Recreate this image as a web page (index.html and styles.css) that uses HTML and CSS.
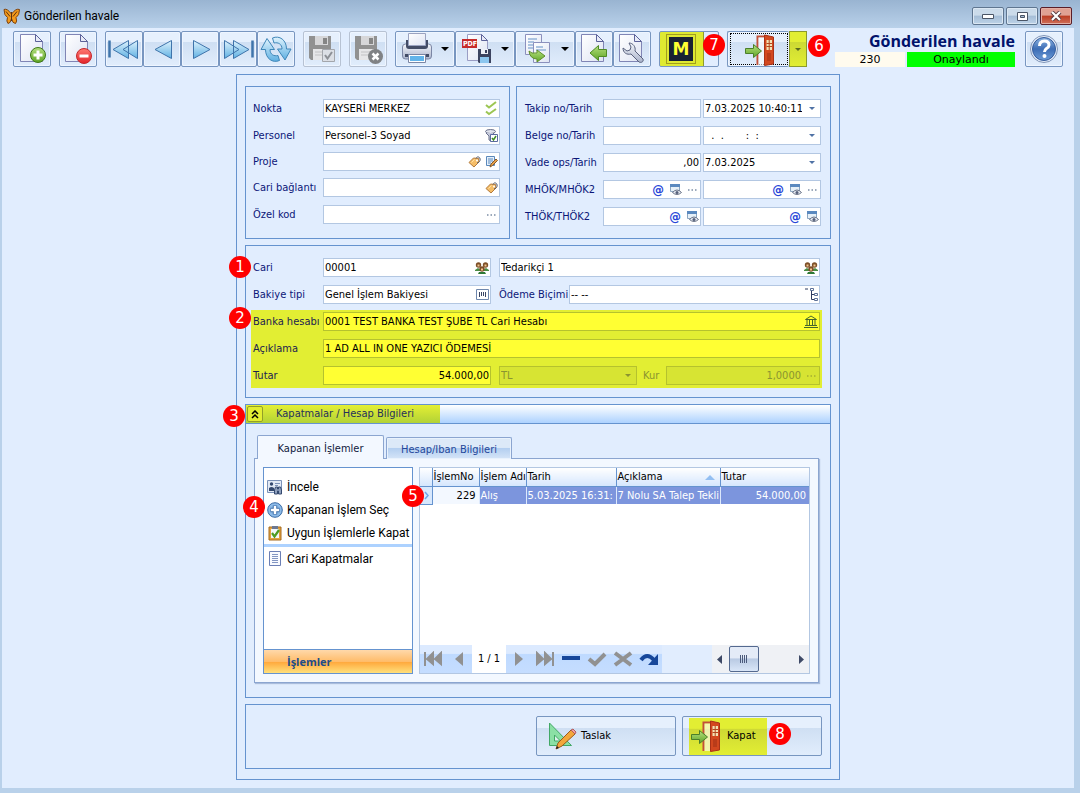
FILE: index.html
```html
<!DOCTYPE html>
<html lang="tr">
<head>
    <meta charset="UTF-8">
    <meta name="viewport" content="width=device-width, initial-scale=1.0">
    <title>Gönderilen havale</title>
    <link rel="stylesheet" href="styles.css">
</head>
<body>
    <!-- shared icons -->
    <svg class="defs" width="0" height="0" aria-hidden="true">
        <defs>
            <linearGradient id="g-page" x1="0" y1="0" x2="1" y2="1"><stop offset="0" stop-color="#fff"/><stop offset="1" stop-color="#dfe4f3"/></linearGradient>
            <linearGradient id="g-blue" x1="0" y1="0" x2="0" y2="1"><stop offset="0" stop-color="#dff3fd"/><stop offset="1" stop-color="#5fb0e2"/></linearGradient>
            <linearGradient id="g-green" x1="0" y1="0" x2="0" y2="1"><stop offset="0" stop-color="#b5e07e"/><stop offset="1" stop-color="#5fa526"/></linearGradient>
            <linearGradient id="g-red" x1="0" y1="0" x2="0" y2="1"><stop offset="0" stop-color="#ff7a72"/><stop offset="1" stop-color="#e3242b"/></linearGradient>
            <linearGradient id="g-steel" x1="0" y1="0" x2="0" y2="1"><stop offset="0" stop-color="#f4f6fb"/><stop offset="1" stop-color="#aab3cb"/></linearGradient>
            <linearGradient id="g-help" x1="0" y1="0" x2="0" y2="1"><stop offset="0" stop-color="#8db4e2"/><stop offset=".5" stop-color="#3d6db5"/><stop offset="1" stop-color="#6c9bd6"/></linearGradient>
        </defs>
        <symbol id="page" viewBox="0 0 32 32">
            <path d="M4.500 1.500h15l7 7v20h-22z" fill="url(#g-page)" stroke="#8085b5"/>
            <path d="M19.500 1.500v7h7z" fill="#e8ebf7" stroke="#5c6299"/>
        </symbol>
        <symbol id="floppy" viewBox="0 0 32 32">
            <path d="M3 3h22v24H5l-2-2z" fill="#919191"/>
            <path d="M9 3h13v9H9z" fill="#d6d6d8"/><path d="M17 5h4v6h-4z" fill="#858585"/>
            <path d="M7 16h15v11H7z" fill="#e6e6e8"/><path d="M9 19h11M9 22h11" stroke="#c2c2c4"/>
        </symbol>
        <symbol id="tri" viewBox="0 0 32 32">
            <path d="M25.500 7.500v18L9 16.500z" fill="url(#g-blue)" stroke="#3f74ab"/>
        </symbol>
        <symbol id="ffwd" viewBox="0 0 32 32">
            <path d="M30.500 7.500v17" stroke="#3f74ab" stroke-width="2.500"/>
            <path d="M2.500 7.500v18L17 16.500zM11.500 7.500v18L27 16.500z" fill="url(#g-blue)" stroke="#3f74ab"/>
        </symbol>
        <symbol id="exit" viewBox="0 0 32 32">
            <path d="M14.500 31V2.500h9" fill="none" stroke="#c2513a" stroke-width="2"/>
            <path d="M15.500 3.500h6V31h-6z" fill="#fff" fill-opacity=".6"/>
            <path d="M21.500 1l9 2v27l-9 1.500z" fill="#d3481f" stroke="#a93218"/>
            <path d="M23.500 6h5.500v10h-5.500z" fill="#f3e2b5"/><path d="M26.200 6v10M23.500 9.500H29M23.500 12.500H29" stroke="#b3471f"/>
            <path d="M26 19v8" stroke="#b93c1a" stroke-width="4"/>
            <path d="M2.500 14.500h8v-4l8 6.500-8 6.500v-4h-8z" fill="url(#g-green)" stroke="#4b7f2a"/>
        </symbol>
        <symbol id="caret" viewBox="0 0 8 4"><path d="M0 0h8L4 4z" fill="currentColor"/></symbol>
        <symbol id="dots" viewBox="0 0 12 12"><path d="M2 6h1.500M5.500 6H7M9 6h1.500" stroke="currentColor" stroke-width="1.200"/></symbol>
        <symbol id="tag" viewBox="0 0 13 13">
            <path d="M1 7.500L5.500 3l5 .5.5 3.500-5 5z" fill="#f5bd68" stroke="#b27a3c"/>
            <path d="M3.500 7.500L6.500 4.500" stroke="#ffe2a4"/><circle cx="9" cy="5.500" r="1" fill="#fff"/><path d="M8 3.500c1-3 5-1.500 4 2-.5 1.500-2 2.500-3 2" fill="none" stroke="#555b6e"/>
        </symbol>
        <symbol id="view" viewBox="0 0 13 13">
            <path d="M1.500 2.500h9v6h-9z" fill="#e6f0f8" stroke="#8ba5c0"/><path d="M1 1h10v3H1z" fill="#5a89bf"/>
            <path d="M3.500 9.500q4.500-5 9 0-4.500 4-9 0z" fill="#e9edf4" stroke="#6b7488"/><circle cx="8" cy="9.500" r="1.500" fill="#56607a"/>
        </symbol>
        <symbol id="people" viewBox="0 0 14 14">
            <path d="M0 9l3-2 3 2v1H0zM8 9l3-2 3 2v1H8z" fill="#4a8d43"/>
            <circle cx="3.500" cy="4" r="2.700" fill="#7d4f28"/><circle cx="10.500" cy="4" r="2.700" fill="#7d4f28"/>
            <path d="M3 13l1-2h6l1 2z" fill="#2f7a37"/><circle cx="7" cy="8" r="2.700" fill="#7d4f28"/>
            <path d="M2.500 4.500h2M9.500 4.500h2M6 8.500h2" stroke="#f3c58f" stroke-width="2"/>
        </symbol>
    </svg>

    <div class="window">
        <header class="titlebar">
            <svg width="18" height="17" viewBox="0 0 18 17"><path d="M8.500 6Q4 0 1 1.500q0 6 3.500 8-1.500 4 .5 6 2.500 0 3.500-5 1 5 4 5 2-2 .5-6 3.500-2 3.500-8Q13 0 8.500 6z" fill="#f39a1b" stroke="#7c4312"/><path d="M8.500 4v9M3 3.500l4 5M14 3.500l-4 5" stroke="#5c3210"/></svg>
            <span class="caption">Gönderilen havale</span>
            <div class="win-buttons">
                <button type="button" aria-label="Küçült"><svg width="12" height="6" viewBox="0 0 12 6"><path d="M.5 1.500h11v4H.5z" fill="#fff" stroke="#4a5566"/></svg></button>
                <button type="button" aria-label="Büyüt"><svg width="11" height="9" viewBox="0 0 11 9"><path d="M.5.5h10v8H.5z" fill="#fff" stroke="#4a5566"/><path d="M3.500 3.500h4v2h-4z" fill="#a9bdd4" stroke="#4a5566"/></svg></button>
                <button type="button" class="close" aria-label="Kapat"><svg width="12" height="10" viewBox="0 0 12 10"><path d="M2 1l8 8M10 1L2 9" stroke="#573a40" stroke-width="4"/><path d="M2 1l8 8M10 1L2 9" stroke="#fff" stroke-width="2.200"/></svg></button>
            </div>
        </header>

        <div class="client">
            <div class="toolbar">
                <div class="group">
                    <button type="button" class="tool" aria-label="Yeni"><svg width="32" height="32"><use href="#page"/><circle cx="22" cy="22" r="7.500" fill="url(#g-green)" stroke="#3f7a17"/><path d="M22 17.500v9M17.500 22h9" stroke="#fff" stroke-width="3"/></svg></button>
                </div>
                <div class="group">
                    <button type="button" class="tool" aria-label="Sil"><svg width="32" height="32"><use href="#page" x="-1"/><circle cx="22" cy="23" r="7.500" fill="url(#g-red)" stroke="#c5282c"/><path d="M17.500 23h9" stroke="#fff" stroke-width="3"/></svg></button>
                </div>
                <div class="group">
                    <button type="button" class="tool" aria-label="İlk"><svg class="flip" width="32" height="32"><use href="#ffwd"/></svg></button>
                    <button type="button" class="tool" aria-label="Önceki"><svg width="32" height="32"><use href="#tri"/></svg></button>
                    <button type="button" class="tool" aria-label="Sonraki"><svg width="32" height="32" viewBox="0 0 32 32"><path d="M9.500 7.500v18L26 16.500z" fill="url(#g-blue)" stroke="#3f74ab"/></svg></button>
                    <button type="button" class="tool" aria-label="Son"><svg width="32" height="32"><use href="#ffwd"/></svg></button>
                    <button type="button" class="tool" aria-label="Yenile"><svg width="32" height="32" viewBox="0 0 32 32"><path d="M12.500 5c7-3 14 2 14 11h4.500l-6 11-7.500-11H22c0-5-4-7-8-6z" fill="url(#g-blue)" stroke="#3f86b8"/><path d="M19.500 27.500c-7 3-14-2-14-11H1L7 5.500l7.500 11H10c0 5 4 7 8 6z" fill="url(#g-blue)" stroke="#3f86b8"/></svg></button>
                </div>
                <div class="group">
                    <button type="button" class="tool" aria-label="Kaydet ve onayla" disabled><svg width="32" height="32"><use href="#floppy"/><path d="M16.500 16.500h12v12h-12z" fill="#dcdfe5" stroke="#a3a6ac"/><path d="M19 22l2.500 3.500L26 19" fill="none" stroke="#8d9096" stroke-width="2"/></svg></button>
                </div>
                <div class="group">
                    <button type="button" class="tool" aria-label="Kaydet ve kapat" disabled><svg width="32" height="32"><use href="#floppy"/><circle cx="23.500" cy="23.500" r="7.500" fill="#808285"/><path d="M20.500 20.500l6 6M26.500 20.500l-6 6" stroke="#fff" stroke-width="2.500"/></svg></button>
                </div>
                <div class="group">
                    <button type="button" class="tool wide" aria-label="Yazdır"><svg width="32" height="32" viewBox="0 0 32 32"><path d="M1.500 14q0-3 3-3h23q3 0 3 3v9q0 3-3 3h-23q-3 0-3-3z" fill="url(#g-steel)" stroke="#7b86a5"/><path d="M5 7h22v6q0 3-3 3H8q-3 0-3-3z" fill="#434c66"/><path d="M7.500.5h17v12h-17z" fill="url(#g-page)" stroke="#9ba3c0"/><path d="M4 21h24v3H4z" fill="#434c66"/><path d="M7.500 21.500h17v8h-17z" fill="#fff" stroke="#7b86a5"/><path d="M9 23h14v5H9z" fill="#62b4ea"/></svg><svg class="drop" width="8" height="4"><use href="#caret"/></svg></button>
                    <button type="button" class="tool wide" aria-label="PDF"><svg width="32" height="32" viewBox="0 0 32 32"><path d="M6.500 1.500h14l6 6v20h-20z" fill="url(#g-page)" stroke="#9a9dc4"/><path d="M20.500 1.500v6h6z" fill="#e8ebf7" stroke="#5c6299"/><path d="M1 6h15v9H1z" fill="#c62b2b"/><text class="pdf" x="2" y="13">PDF</text><path d="M17 16h13v14H18l-1-1z" fill="#3c4460"/><path d="M20 16h7v5h-7z" fill="#eef1f8"/><path d="M24 17h2v3h-2z" fill="#3c4460"/><path d="M19 24h9v6h-9z" fill="#8cc6ef"/></svg><svg class="drop" width="8" height="4"><use href="#caret"/></svg></button>
                    <button type="button" class="tool wide" aria-label="Kopyala"><svg width="32" height="32" viewBox="0 0 32 32"><path d="M4.500 1.500h16v20h-16z" fill="url(#g-page)" stroke="#8b90bd"/><path d="M7 6h9M7 9h6M7 12h6M7 15h5" stroke="#94b2d8" stroke-width="1.500"/><path d="M12.500 9.500h16v20h-16z" fill="url(#g-page)" stroke="#8b90bd"/><path d="M15 14h7M15 17h10" stroke="#94b2d8" stroke-width="1.500"/><path d="M8 18q2 3 8 2v-3l8 6-8 6v-3Q9 26 8 18z" fill="url(#g-green)" stroke="#5f8e2a"/></svg><svg class="drop" width="8" height="4"><use href="#caret"/></svg></button>
                    <button type="button" class="tool" aria-label="Geri al"><svg width="32" height="32"><use href="#page" x="-1"/><path d="M28.500 16.500h-8v-4L12 20l8.500 7.500v-4h8z" fill="url(#g-green)" stroke="#4f8a25"/></svg></button>
                    <button type="button" class="tool" aria-label="Ayarlar"><svg width="32" height="32"><use href="#page" x="-1"/><path d="M13 10c4 0 7 4 6 8l8 8c1 3-2 4-4 3l-8-8c-4 1-8-1-8-6l4 3 3-1 1-3z" fill="url(#g-steel)" stroke="#59617d"/></svg></button>
                </div>
                <div class="group">
                    <button type="button" class="tool mark" aria-label="M"><span class="mark-face"><span class="mark-letter">M</span></span></button>
                    <span class="badge badge-7">7</span>
                </div>
                <div class="group">
                    <button type="button" class="tool exit" aria-label="Kapat"><span class="focus"><svg width="32" height="32"><use href="#exit"/></svg></span></button>
                    <button type="button" class="exit-drop" aria-label="Kapat seçenekleri"><svg width="6" height="3"><use href="#caret"/></svg></button>
                    <span class="badge badge-6">6</span>
                </div>
                <div class="doc">
                    <h1>Gönderilen havale</h1>
                    <div class="doc-state"><span class="doc-no">230</span><span class="doc-ok">Onaylandı</span></div>
                </div>
                <button type="button" class="tool" aria-label="Yardım"><svg width="32" height="32" viewBox="0 0 32 32"><circle cx="16" cy="16" r="13.500" fill="#e6eefa" stroke="#8095b8"/><circle cx="16" cy="16" r="11.500" fill="url(#g-help)" stroke="#345b9c"/><path d="M11.500 13q0-5 5-5 4.500 0 4.500 4 0 2-2.500 3.500-2 1.500-2 3.500" fill="none" stroke="#fff" stroke-width="3"/><circle cx="16.500" cy="23" r="2" fill="#fff"/></svg></button>
            </div>

            <main class="form">
                <div class="pair">
                    <section class="box general">
                        <label for="nokta">Nokta</label>
                        <div class="field"><input id="nokta" value="KAYSERİ MERKEZ"><button type="button" aria-label="Nokta seç"><svg width="13" height="15" viewBox="0 0 13 15"><path d="M1 4l3 2.500L11 1M1 10.500l3 2.500 7-5" fill="none" stroke="#9cc653" stroke-width="2"/></svg></button></div>
                        <label for="personel">Personel</label>
                        <div class="field"><input id="personel" value="Personel-3 Soyad"><button type="button" aria-label="Personel seç"><svg width="13" height="13" viewBox="0 0 13 13"><ellipse cx="5.500" cy="2.500" rx="5" ry="2" fill="#e1e4ee" stroke="#69708c"/><path d="M1 4l3 3v4l2 1V7l3-3" fill="#c3c8da" stroke="#69708c"/><path d="M5.500 5.500h7v7h-7z" fill="#fff" stroke="#5a6aa0"/><path d="M7 9l1.500 2L11 7" fill="none" stroke="#3f8c27" stroke-width="1.500"/></svg></button></div>
                        <label for="proje">Proje</label>
                        <div class="field"><input id="proje"><button type="button" aria-label="Proje seç"><svg width="13" height="13"><use href="#tag"/></svg></button><button type="button" aria-label="Proje düzenle"><svg width="13" height="13" viewBox="0 0 13 13"><path d="M1.500 1.500h8v9h-8z" fill="#e5f0fb" stroke="#5a88bb"/><path d="M3 4h5M3 6h5M3 8h3" stroke="#5a88bb"/><path d="M5 12l1-3 5-5 1.500 1.500-5 5z" fill="#e5a04a" stroke="#8a5a28"/></svg></button></div>
                        <label for="baglanti">Cari bağlantı</label>
                        <div class="field"><input id="baglanti"><button type="button" aria-label="Bağlantı seç"><svg width="13" height="13"><use href="#tag"/></svg></button></div>
                        <label for="ozel">Özel kod</label>
                        <div class="field"><input id="ozel"><button type="button" aria-label="Özel kod seç"><svg width="12" height="12"><use href="#dots"/></svg></button></div>
                    </section>

                    <section class="box refs">
                        <label for="takip">Takip no/Tarih</label>
                        <div class="field"><input id="takip"></div>
                        <div class="field"><input aria-label="Takip tarihi" value="7.03.2025 10:40:11"><button type="button" class="combo" aria-label="Takvim"><svg width="6" height="3"><use href="#caret"/></svg></button></div>
                        <label for="belge">Belge no/Tarih</label>
                        <div class="field"><input id="belge"></div>
                        <div class="field"><input class="mask" aria-label="Belge tarihi" value="  .  .       :  :"><button type="button" class="combo" aria-label="Takvim"><svg width="6" height="3"><use href="#caret"/></svg></button></div>
                        <label for="vade">Vade ops/Tarih</label>
                        <div class="field"><input id="vade" class="num" value=",00"></div>
                        <div class="field"><input aria-label="Vade tarihi" value="7.03.2025"><button type="button" class="combo" aria-label="Takvim"><svg width="6" height="3"><use href="#caret"/></svg></button></div>
                        <label for="mhok">MHÖK/MHÖK2</label>
                        <div class="field"><input id="mhok"><button type="button" class="at">@</button><button type="button" aria-label="Göster"><svg width="13" height="13"><use href="#view"/></svg></button><button type="button" aria-label="Seç"><svg width="12" height="12"><use href="#dots"/></svg></button></div>
                        <div class="field"><input aria-label="MHÖK2"><button type="button" class="at">@</button><button type="button" aria-label="Göster"><svg width="13" height="13"><use href="#view"/></svg></button><button type="button" aria-label="Seç"><svg width="12" height="12"><use href="#dots"/></svg></button></div>
                        <label for="thok">THÖK/THÖK2</label>
                        <div class="field"><input id="thok"><button type="button" class="at">@</button><button type="button" aria-label="Göster"><svg width="13" height="13"><use href="#view"/></svg></button></div>
                        <div class="field"><input aria-label="THÖK2"><button type="button" class="at">@</button><button type="button" aria-label="Göster"><svg width="13" height="13"><use href="#view"/></svg></button></div>
                    </section>
                </div>

                <section class="box account">
                    <div class="row">
                        <span class="badge badge-1">1</span>
                        <label for="cari">Cari</label>
                        <div class="field code"><input id="cari" value="00001"><button type="button" aria-label="Cari seç"><svg width="14" height="14"><use href="#people"/></svg></button></div>
                        <div class="field"><input aria-label="Cari adı" value="Tedarikçi 1"><button type="button" aria-label="Cari seç"><svg width="14" height="14"><use href="#people"/></svg></button></div>
                    </div>
                    <div class="row">
                        <label for="bakiye">Bakiye tipi</label>
                        <div class="field code"><input id="bakiye" value="Genel İşlem Bakiyesi"><button type="button" aria-label="Bakiye seç"><svg width="13" height="11" viewBox="0 0 13 11"><path d="M.5.5h12v10H.5z" fill="#fff" stroke="#6e87ad"/><path d="M3.500 3v5M5.500 3v4M7.500 3v4M9.500 3v5" stroke="#3a4664"/></svg></button></div>
                        <label for="odeme" class="second">Ödeme Biçimi</label>
                        <div class="field"><input id="odeme" value="-- --"><button type="button" aria-label="Ödeme seç"><svg width="13" height="13" viewBox="0 0 13 13"><path d="M0 1h3M6.500 3v8.500H9M6.500 6.500H9" fill="none" stroke="#2d3a60"/><path d="M5.500.5h3v2h-3zM9.500 5.500h3v2h-3zM9.500 10.500h3v2h-3z" fill="#fff" stroke="#5d7198"/></svg></button></div>
                    </div>
                    <div class="marked">
                        <span class="badge badge-2">2</span>
                        <div class="row">
                            <label for="banka">Banka hesabı</label>
                            <div class="field"><input id="banka" value="0001 TEST BANKA TEST ŞUBE TL Cari Hesabı"><button type="button" aria-label="Banka seç"><svg width="14" height="13" viewBox="0 0 14 13"><path d="M1.500 4.500L7 1l5.500 3.500zM3 5v5M5.500 5v5M8.500 5v5M11 5v5M1 10.500h12M0 12.500h14" fill="none" stroke="#47672c"/></svg></button></div>
                        </div>
                        <div class="row">
                            <label for="aciklama">Açıklama</label>
                            <div class="field"><input id="aciklama" value="1 AD ALL IN ONE YAZICI ÖDEMESİ"></div>
                        </div>
                        <div class="row">
                            <label for="tutar">Tutar</label>
                            <div class="field code"><input id="tutar" class="num" value="54.000,00"></div>
                            <div class="field off currency"><select aria-label="Para birimi" disabled><option>TL</option></select><svg width="6" height="3"><use href="#caret"/></svg></div>
                            <label for="kur" class="kur">Kur</label>
                            <div class="field off"><input id="kur" class="num" value="1,0000" disabled><button type="button" aria-label="Kur seç" disabled><svg width="12" height="12"><use href="#dots"/></svg></button></div>
                        </div>
                    </div>
                </section>

                <section class="details">
                    <span class="badge badge-3">3</span>
                    <div class="details-head">
                        <div class="details-title">
                            <button type="button" aria-label="Daralt"><svg width="8" height="9" viewBox="0 0 8 9"><path d="M1 4l3-3 3 3M1 8l3-3 3 3" fill="none" stroke="#000" stroke-width="1.500"/></svg></button>
                            <h2>Kapatmalar / Hesap Bilgileri</h2>
                        </div>
                    </div>
                    <div class="details-body">
                        <div class="tabs">
                            <button type="button" class="tab active">Kapanan İşlemler</button>
                            <button type="button" class="tab">Hesap/Iban Bilgileri</button>
                        </div>
                        <div class="tab-page">
                            <nav class="actions">
                                <a href="#incele"><svg width="16" height="16" viewBox="0 0 16 16"><path d="M.5 1.500h14v12H.5z" fill="#e2eaf6" stroke="#7c92b8"/><circle cx="4.500" cy="5" r="1.700" fill="#34496f"/><path d="M2 12V9q2.500-2 5 0v3z" fill="#34496f"/><path d="M8 4.500h5M8 6.500h3" stroke="#7c92b8"/><path d="M7.500 15v-4l1-3h2v2h1V8h2l1 3v4h-3v-3h-1v3z" fill="#8fa0bd" stroke="#34496f"/></svg>İncele</a>
                                <a href="#sec"><svg width="16" height="16" viewBox="0 0 16 16"><circle cx="8" cy="8" r="7.300" fill="#8dbbe8" stroke="#3a6ba6"/><path d="M8 3.500v9M3.500 8h9" stroke="#3a6ba6" stroke-width="4.500"/><path d="M8 4v8M4 8h8" stroke="#fff" stroke-width="2.500"/></svg>Kapanan İşlem Seç<span class="badge badge-4">4</span></a>
                                <a href="#uygun"><svg width="16" height="16" viewBox="0 0 16 16"><path d="M2 2h12v13H2z" fill="#e3a23f" stroke="#a66a1e"/><path d="M4 4h8v9H4z" fill="#f3f6fa"/><path d="M5 1h6v3H5z" fill="#6d7890"/><path d="M5 8l2.500 3.500L12 5" fill="none" stroke="#4d9b22" stroke-width="2.200"/></svg>Uygun İşlemlerle Kapat</a>
                                <hr>
                                <a href="#cari"><svg width="16" height="16" viewBox="0 0 16 16"><path d="M2.500.5h11v14h-11z" fill="#f8faff" stroke="#6b7fb5"/><path d="M5 3.500h6M5 5.500h6M5 7.500h6M5 9.500h6M5 11.500h6" stroke="#8295c2"/></svg>Cari Kapatmalar</a>
                                <h3>İşlemler</h3>
                            </nav>
                            <div class="grid">
                                <span class="badge badge-5">5</span>
                                <table>
                                    <colgroup><col class="c-mark"><col class="c-no"><col class="c-name"><col class="c-date"><col class="c-text"><col></colgroup>
                                    <thead>
                                        <tr><th></th><th>İşlemNo</th><th>İşlem Adı</th><th>Tarih</th><th class="sorted">Açıklama<svg width="10" height="5" viewBox="0 0 10 5"><path d="M5 0l5 5H0z" fill="#93bff2"/></svg></th><th>Tutar</th></tr>
                                    </thead>
                                    <tbody>
                                        <tr><td class="mark-cell"><svg width="5" height="9" viewBox="0 0 5 9"><path d="M1 1l3 3.500L1 8" fill="none" stroke="#6fa5e6" stroke-width="1.500"/></svg></td><td class="no">229</td><td>Alış</td><td>5.03.2025 16:31:</td><td>7 Nolu SA Talep Tekli</td><td class="sum">54.000,00</td></tr>
                                    </tbody>
                                </table>
                                <div class="grid-foot">
                                    <div class="pager">
                                        <button type="button" aria-label="İlk kayıt"><svg width="20" height="16" viewBox="0 0 20 16"><path d="M2 1v14M10 2v11L4 8zM18 2v11l-6-5z" fill="#919191" stroke="#919191" stroke-width="2"/></svg></button>
                                        <button type="button" aria-label="Önceki kayıt"><svg width="10" height="16" viewBox="0 0 10 16"><path d="M9 1v14L1 8z" fill="#919191"/></svg></button>
                                        <span>1 / 1</span>
                                        <button type="button" aria-label="Sonraki kayıt"><svg width="10" height="16" viewBox="0 0 10 16"><path d="M1 1v14l8-7z" fill="#919191"/></svg></button>
                                        <button type="button" aria-label="Son kayıt"><svg width="20" height="16" viewBox="0 0 20 16"><path d="M18 1v14M10 2v11l6-5zM2 2v11l6-5z" fill="#919191" stroke="#919191" stroke-width="2"/></svg></button>
                                        <button type="button" aria-label="Sil"><svg width="20" height="16" viewBox="0 0 20 16"><path d="M1 7h18" stroke="#17479a" stroke-width="4"/></svg></button>
                                        <button type="button" aria-label="Onayla"><svg width="20" height="16" viewBox="0 0 20 16"><path d="M2 8l6 5L18 3" fill="none" stroke="#919191" stroke-width="4"/></svg></button>
                                        <button type="button" aria-label="Vazgeç"><svg width="20" height="16" viewBox="0 0 20 16"><path d="M2 2l16 12M18 2L2 14" stroke="#919191" stroke-width="4"/></svg></button>
                                        <button type="button" aria-label="Yenile"><svg width="20" height="16" viewBox="0 0 20 16"><path d="M2 9q6-8 13 0" fill="none" stroke="#17479a" stroke-width="4"/><path d="M19 3v11H9z" fill="#17479a"/></svg></button>
                                    </div>
                                    <div class="scroll">
                                        <svg width="5" height="9" viewBox="0 0 5 9"><path d="M5 0v9L0 4.500z" fill="#3e4966"/></svg>
                                        <span class="thumb"></span>
                                        <svg width="5" height="9" viewBox="0 0 5 9"><path d="M0 0v9l5-4.500z" fill="#3e4966"/></svg>
                                    </div>
                                </div>
                            </div>
                        </div>
                    </div>
                </section>

                <section class="box footer">
                    <button type="button" class="command"><svg width="32" height="32" viewBox="0 0 32 32"><path d="M3.500 3v22.500h22z" fill="#8be0a5" stroke="#42a866"/><path d="M8.500 15v6h6z" fill="#dff1ee" stroke="#42a866"/><path d="M10 29l2-6L25 10l4 4-13 12z" fill="#f3a73b" stroke="#9a5a1c"/><path d="M25 10l2-1 3 3-1 2z" fill="#f2a3a3" stroke="#b25b5b"/><path d="M10 29l1-3 2 2z" fill="#222"/></svg>Taslak</button>
                    <button type="button" class="command close-cmd"><span class="close-mark"><svg width="32" height="32"><use href="#exit"/></svg>Kapat</span><span class="badge badge-8">8</span></button>
                </section>
            </main>
        </div>
    </div>
</body>
</html>
```

FILE: styles.css
```css
* {
    box-sizing: border-box;
}
body {
    margin: 0;
    font-family: "DejaVu Sans Condensed", "Open Sans", sans-serif;
    font-size: 11px;
    line-height: 14px;
    color: #000;
}
button, input, select {
    font: inherit;
    color: inherit;
    margin: 0;
    padding: 0;
    border: 0;
    background: none;
}
svg {
    display: block;
    flex: none;
}
h1, h2, h3 {
    margin: 0;
}
.defs {
    position: absolute;
}
.flip {
    transform: scaleX(-1);
}

/* window frame */
.window {
    display: flex;
    flex-direction: column;
    min-height: 100vh;
    padding: 0 6px 5px 2px;
    background: linear-gradient(#99b4d1, #b9d1ea 28px);
}
.titlebar {
    display: flex;
    align-items: center;
    height: 28px;
    padding-top: 4px;
    padding-left: 1px;
    gap: 3px;
}
.caption {
    font: 12px/16px Roboto, "Open Sans", sans-serif;
}
.win-buttons {
    display: flex;
    gap: 2px;
    margin-left: auto;
    margin-right: 2px;
}
.win-buttons button {
    display: flex;
    align-items: center;
    justify-content: center;
    width: 32px;
    height: 18px;
    border: 1px solid #5f7690;
    border-radius: 2px;
    background: linear-gradient(#cbdbea 45%, #a5bdd6 50%, #bdd3e8);
    box-shadow: inset 0 0 0 1px #dbe7f3;
}
.win-buttons .close {
    border-color: #5a1e28;
    background: linear-gradient(#e0a193 45%, #bb3d23 50%, #d0705a);
    box-shadow: inset 0 0 0 1px #e3aea4;
}
.client {
    flex: 1;
    padding-bottom: 8px;
    background: #e1edfe;
}

/* toolbar */
.toolbar {
    display: flex;
    gap: 8px;
    height: 46px;
    padding: 3px 11px 0;
}
.group {
    position: relative;
    display: flex;
}
.tool {
    display: flex;
    align-items: center;
    justify-content: center;
    width: 38px;
    height: 36px;
    border: 1px solid #7896c0;
    border-radius: 2px;
    background: linear-gradient(#e6f0fd 28%, #cfdff3 30%, #e1edfc);
    box-shadow: inset 0 0 0 1px #eef5ff;
}
.tool:disabled {
    border-color: #b7c2d3;
}
.wide {
    width: 60px;
    gap: 8px;
}
.pdf {
    font: bold 7px "DejaVu Sans Condensed", sans-serif;
    fill: #fff;
}
.mark {
    width: 60px;
    justify-content: flex-start;
    background: linear-gradient(90deg, #dfea31 43px, #8e9b2e 43px, #8e9b2e 44px, #e1edfe 44px);
    box-shadow: none;
}
.mark-face {
    margin-left: 6px;
    padding: 2px;
    border: 1px solid #a29e1e;
}
.mark-letter {
    display: block;
    width: 24px;
    height: 24px;
    background: #1a2233;
    color: #ffff33;
    font: bold 17px/25px "DejaVu Sans", sans-serif;
    text-align: center;
}
.exit {
    width: 62px;
    border-right: 0;
}
.focus {
    display: flex;
    justify-content: center;
    width: 58px;
    height: 32px;
    border: 1px dotted #000;
}
.exit-drop {
    display: flex;
    align-items: center;
    justify-content: center;
    width: 18px;
    height: 36px;
    border: 1px solid #8b9b2c;
    background: linear-gradient(#e2ee33 28%, #ccd934 30%, #e2ee33);
    color: #5a6b20;
}
.doc {
    width: 180px;
    margin-left: auto;
}
.doc h1 {
    height: 18px;
    font: bold 16px/20px "Open Sans", sans-serif;
    color: #00126b;
    text-align: right;
    white-space: nowrap;
}
.doc-state {
    display: flex;
    gap: 2px;
    margin-top: 3px;
    font-family: "DejaVu Sans", sans-serif;
    line-height: 15px;
    text-align: center;
}
.doc-no {
    flex: 0 0 70px;
    background: #fffbee;
}
.doc-ok {
    flex: 1;
    background: #00ff00;
}
.doc + .tool {
    margin-left: 2px;
}

/* numbered callouts */
.badge {
    position: absolute;
    width: 22px;
    height: 22px;
    border-radius: 50%;
    background: #ff0000;
    color: #fff;
    font: 15px/22px "DejaVu Sans", sans-serif;
    text-align: center;
    z-index: 1;
}
.badge-1 { left: -24px; top: -2px; }
.badge-2 { left: -22px; top: -3px; }
.badge-3 { left: -23px; top: 0; }
.badge-4 { left: -21px; top: -2px; }
.badge-5 { left: -18px; top: 17px; }
.badge-6 { left: 81px; top: 4px; }
.badge-7 { left: 44px; top: 3px; }
.badge-8 { left: 86px; top: 6px; }

/* form */
.form {
    width: 100%;
    max-width: 604px;
    margin: 0 auto;
    padding: 11px 8px 10px;
    border: 1px solid #6593cf;
    display: flex;
    flex-direction: column;
    gap: 6px;
}
.box, .details {
    border: 1px solid #6593cf;
}
label {
    color: #0b1678;
    white-space: nowrap;
}
.pair {
    display: flex;
    gap: 6px;
}
.general {
    flex: 0 0 265px;
    display: grid;
    grid-template-columns: 70px 1fr;
    grid-template-rows: 27px 26px 26px 27px 19px;
    padding: 12px 9px 14px 7px;
}
.refs {
    flex: 1;
    display: grid;
    grid-template-columns: 78px 98px 1fr;
    grid-auto-rows: 19px;
    row-gap: 8px;
    padding: 12px 9px 12px 8px;
}
.refs .field:nth-child(3n) {
    margin-left: 2px;
}
.general label, .refs label {
    line-height: 19px;
}
.field {
    display: flex;
    align-items: center;
    flex: 1;
    min-width: 0;
    height: 19px;
    border: 1px solid #b3c7e2;
    background: #fff;
}
.field input, .field select {
    flex: 1;
    min-width: 0;
    width: 0;
    height: 17px;
    padding: 0 1px;
    appearance: none;
}
.field button {
    display: flex;
    align-items: center;
    justify-content: center;
    width: 16px;
    height: 16px;
    margin-left: 1px;
    color: #3b5478;
}
.field .combo {
    color: #5072a5;
}
.field .at {
    font: bold 13px/14px "DejaVu Sans Condensed", sans-serif;
    color: #2846d8;
}
.mask {
    white-space: pre;
}
.num {
    text-align: right;
}
.account {
    padding: 12px 8px 9px 5px;
}
.row {
    position: relative;
    display: flex;
    align-items: center;
    margin: 0 2px 8px;
}
.row label {
    flex: 0 0 70px;
}
.row .code {
    flex: 0 0 168px;
    margin-right: 8px;
}
.marked {
    position: relative;
    margin-top: -2px;
    padding: 2px 0 3px;
    background: #e2ee33;
}
.marked .row:last-child {
    margin-bottom: 0;
}
.marked label {
    color: #1b2250;
}
.marked .field {
    border-color: #b5c22e;
    background: #ffff33;
}
.marked .off {
    background: #d7e433;
    color: #8b9430;
}
.marked .off input, .marked .off select, .marked .off button {
    color: #8b9430;
    opacity: 1;
}
.marked .currency {
    flex: 0 0 138px;
    padding-right: 5px;
}
.marked .kur {
    flex: 0 0 29px;
    padding-left: 6px;
    color: #8b9430;
}

/* collapsible section */
.details {
    position: relative;
}
.details-head {
    height: 19px;
    border-bottom: 1px solid #6593cf;
    background: linear-gradient(#fff, #add2ff);
}
.details-title {
    display: flex;
    align-items: center;
    gap: 13px;
    width: 194px;
    height: 18px;
    padding-left: 1px;
    background: linear-gradient(#e4ef34, #b2d236);
}
.details-title button {
    display: flex;
    align-items: center;
    justify-content: center;
    width: 16px;
    height: 16px;
    border: 1px solid #929f28;
    border-radius: 2px;
    background: #e2ee33;
}
.details-title h2 {
    font-size: 11px;
    font-weight: normal;
    color: #24305c;
}
.details-body {
    padding: 11px 11px 14px 8px;
}
.tabs {
    display: flex;
    align-items: flex-end;
    gap: 2px;
    height: 24px;
    padding-left: 3px;
}
.tab {
    width: 126px;
    height: 22px;
    padding-top: 2px;
    border: 1px solid #8ba5d0;
    border-bottom: 0;
    border-radius: 2px 2px 0 0;
    background: linear-gradient(#dce9f8 45%, #b4cff0 50%, #d6e5f8);
    box-shadow: inset 0 0 0 1px #e9f2fd;
    color: #24479a;
}
.tab.active {
    position: relative;
    z-index: 1;
    width: 127px;
    height: 24px;
    background: #f3f8ff;
    box-shadow: none;
    color: #10183c;
}
.tab-page {
    display: flex;
    gap: 6px;
    margin-top: -1px;
    padding: 8px;
    border: 1px solid #8ba5d0;
    background: #f3f8ff;
    box-shadow: 1px 1px 1px #a9bcdc;
}
.actions {
    flex: 0 0 150px;
    min-width: 0;
    display: flex;
    flex-direction: column;
    min-height: 207px;
    padding-top: 7px;
    border: 1px solid #6593cf;
    background: #fff;
    font: 12px/16px Roboto, "Open Sans", sans-serif;
}
.actions a {
    position: relative;
    display: flex;
    align-items: center;
    gap: 4px;
    height: 23px;
    padding-left: 3px;
    color: #000;
    text-decoration: none;
    white-space: nowrap;
}
.actions hr {
    width: 100%;
    height: 3px;
    margin: 0;
    border: 0;
    background: #add2ff;
}
.actions h3 {
    height: 24px;
    margin-top: auto;
    padding-left: 23px;
    border-top: 1px solid #6593cf;
    background: linear-gradient(#ffd9aa, #ffbc6a 50%, #ffa83c 52%, #ffe07c);
    font: bold 11px/24px "Open Sans", sans-serif;
    color: #204d89;
}
.grid {
    position: relative;
    flex: 1;
    min-width: 0;
    display: flex;
    flex-direction: column;
    border: 1px solid #b3c7e2;
    background: #fff;
}
table {
    width: 100%;
    table-layout: fixed;
    border-collapse: collapse;
}
.c-mark { width: 12px; }
.c-no { width: 47px; }
.c-name { width: 47px; }
.c-date { width: 90px; }
.c-text { width: 104px; }
th, td {
    height: 18px;
    padding: 1px 1px 0;
    overflow: hidden;
    white-space: nowrap;
    font-weight: normal;
    text-align: left;
}
th {
    border-right: 1px solid #6593cf;
    border-bottom: 1px solid #6593cf;
    background: linear-gradient(#fff, #d5e6fd);
}
th:last-child {
    border-right: 0;
}
th svg {
    float: right;
    margin: 5px 4px 0 0;
}
td {
    border-right: 1px solid #dce8fb;
    background: #7c95dd;
    color: #fff;
}
td:last-child {
    border-right: 0;
}
td.mark-cell {
    padding-left: 4px;
    border-right-color: #6593cf;
    border-bottom: 1px solid #6593cf;
    background: #d8e8fd;
}
td.no {
    padding-right: 3px;
    background: #f3f8ff;
    color: #000;
    text-align: right;
}
td.sum {
    padding-right: 3px;
    text-align: right;
}
.grid-foot {
    display: flex;
    justify-content: space-between;
    height: 28px;
    margin-top: auto;
    background: #e1edfe;
}
.pager {
    display: flex;
    background: linear-gradient(#dceaff 30%, #bfdaff 34%, #c5ddff);
}
.pager button {
    display: flex;
    align-items: center;
    justify-content: center;
    width: 26px;
    height: 28px;
}
.pager span {
    width: 34px;
    background: #fff;
    line-height: 28px;
    text-align: center;
}
.scroll {
    display: flex;
    align-items: center;
    gap: 7px;
    width: 97px;
    padding: 0 5px;
    background: #eff1f5;
}
.scroll svg:last-child {
    margin-left: auto;
}
.thumb {
    width: 30px;
    height: 26px;
    border: 1px solid #54698f;
    border-radius: 2px;
    background:
        repeating-linear-gradient(90deg, #4b5a7c 0 1px, transparent 1px 2px) center / 8px 8px no-repeat,
        linear-gradient(#e4ebf7 45%, #b9cae3 50%, #d9e6f8);
}

/* bottom buttons */
.footer {
    display: flex;
    justify-content: flex-end;
    gap: 6px;
    padding: 11px 8px 12px;
}
.command {
    position: relative;
    display: flex;
    align-items: center;
    width: 140px;
    height: 40px;
    padding-left: 9px;
    border: 1px solid #7896c0;
    border-radius: 2px;
    background: linear-gradient(#e6f0fd 28%, #cfdff3 30%, #e1edfc);
    gap: 3px;
}
.close-cmd {
    padding-left: 6px;
}
.close-mark {
    display: flex;
    align-items: center;
    gap: 6px;
    width: 78px;
    height: 37px;
    background: linear-gradient(#e2ee33 28%, #ced934 30%, #e2ee33);
}
```
